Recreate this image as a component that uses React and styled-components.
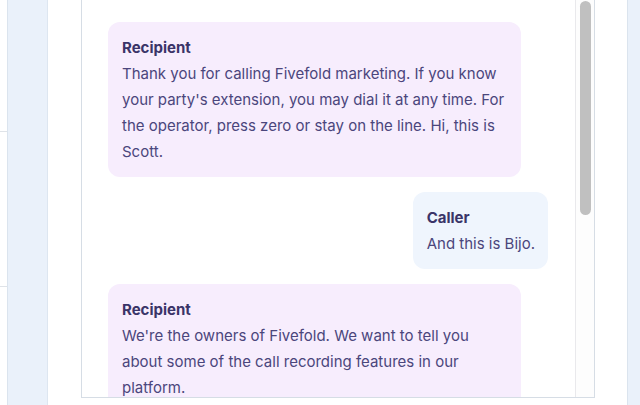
import React from "react"
import styled, { createGlobalStyle } from "styled-components"

const GlobalStyle = createGlobalStyle`
  html, body {
    margin: 0;
    padding: 0;
    background: #fff;
  }
  body {
    font-family: Inter, "Noto Sans", "Liberation Sans", sans-serif;
    -webkit-font-smoothing: antialiased;
  }
`

const messages = [
  {
    from: "recipient",
    text: "Thank you for calling Fivefold marketing. If you know your party's extension, you may dial it at any time. For the operator, press zero or stay on the line. Hi, this is Scott.",
  },
  { from: "caller", text: "And this is Bijo." },
  {
    from: "recipient",
    text: "We're the owners of Fivefold. We want to tell you about some of the call recording features in our platform.",
  },
]

const App = () => {
  return (
    <>
      <GlobalStyle />
      <Page>
        <LeftEdge>
          <EdgeRow $h={132} />
          <EdgeRow $h={155} />
          <EdgeRow $h={118} $last />
        </LeftEdge>
        <SideRail />
        <Gutter $w={33} />
        <Panel>
          <Messages>
            {messages.map((m, i) => (
              <Bubble key={i} $side={m.from}>
                <Speaker>{m.from === "caller" ? "Caller" : "Recipient"}</Speaker>
                <Line>{m.text}</Line>
              </Bubble>
            ))}
          </Messages>
          <Track>
            <Thumb />
          </Track>
        </Panel>
        <Gutter $w={32} />
        <RightRail />
      </Page>
    </>
  )
}

const Page = styled.div`
  display: flex;
  width: 640px;
  height: 405px;
  overflow: hidden;
`

const LeftEdge = styled.div`
  width: 7px;
  display: flex;
  flex-direction: column;
`

const EdgeRow = styled.div`
  height: ${(p) => p.$h}px;
  border-bottom: ${(p) => (p.$last ? "none" : "1px solid #dfe3e8")};
  box-sizing: border-box;
`

const SideRail = styled.div`
  width: 41px;
  background: #eaf1fa;
  border-left: 1px solid #dbe4ee;
  border-right: 1px solid #dde6f0;
  box-sizing: border-box;
`

const Gutter = styled.div`
  width: ${(p) => p.$w}px;
`

const Panel = styled.div`
  width: 514px;
  height: 398px;
  display: flex;
  border: 1px solid #d6dde5;
  border-top: none;
  box-sizing: border-box;
  background: #fff;
`

const Messages = styled.div`
  flex: 1;
  display: flex;
  flex-direction: column;
  gap: 14px;
  padding: 22px 27px 0 26px;
  overflow: hidden;
`

const Bubble = styled.div`
  align-self: ${(p) => (p.$side === "caller" ? "flex-end" : "flex-start")};
  max-width: 413px;
  box-sizing: border-box;
  padding: 13px ${(p) => (p.$side === "caller" ? "13px" : "14px")} 12px 14px;
  border-radius: 12px;
  background: ${(p) => (p.$side === "caller" ? "#eff5fd" : "#f7edfd")};
  flex-shrink: 0;
  & + & {
    margin-top: 1px;
  }
`

const Speaker = styled.div`
  font-size: 15px;
  line-height: 26px;
  font-weight: 700;
  color: #3a3468;
`

const Line = styled.div`
  font-size: 15px;
  line-height: 26px;
  color: #4b467c;
`

const Track = styled.div`
  width: 19px;
  border-left: 1px solid #e9e9ec;
  background: #fdfdfd;
  padding: 1px 3px 0 4px;
  box-sizing: border-box;
`

const Thumb = styled.div`
  height: 214px;
  border-radius: 6px;
  background: #c0c0c0;
`

const RightRail = styled.div`
  flex: 1;
  background: #eaf1fa;
  border-left: 1px solid #dbe4ee;
`

export default App
